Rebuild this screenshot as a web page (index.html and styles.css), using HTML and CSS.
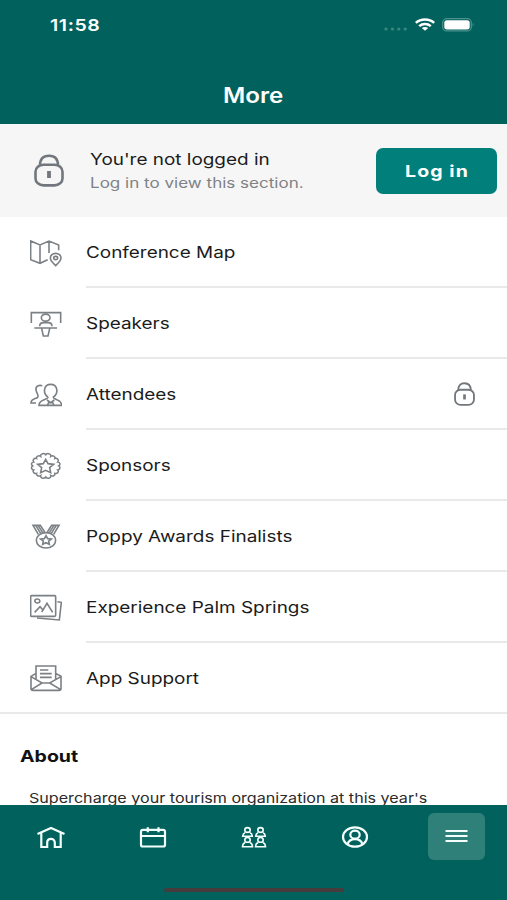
FILE: index.html
```html
<!DOCTYPE html>
<html lang="en">
<head>
<meta charset="utf-8">
<title>More</title>
<link rel="stylesheet" href="styles.css">
</head>
<body>
<svg class="defs" aria-hidden="true">
  <symbol id="lock" viewBox="0 0 30 33" preserveAspectRatio="none">
    <path d="M6 11.500C6 5 9 1.800 15 1.800S24 5 24 11.500" />
    <rect x="1.500" y="10.700" width="27" height="20.700" rx="8" ry="7"/>
    <path d="M15 17v7" stroke-width="3.800"/>
  </symbol>
</svg>
<div class="screen">
  <header class="top">
    <div class="status">
      <span class="wide clock">11:58</span>
      <div class="indicators">
        <svg width="24" height="4" viewBox="0 0 24 4" fill="#3d8781"><circle cx="2" cy="2" r="1.600"/><circle cx="8.400" cy="2" r="1.600"/><circle cx="14.800" cy="2" r="1.600"/><circle cx="21.200" cy="2" r="1.600"/></svg>
        <svg class="wifi" width="20" height="13" viewBox="0 0 20 13" fill="none" stroke="#fff" stroke-width="2.500"><path d="M.8 4.900C5.800 .5 14.200 .5 19.200 4.900"/><path d="M4.200 8.100C7.500 5.200 12.500 5.200 15.800 8.100"/><path d="M10 12.800 6.800 10.100C8.500 8.500 11.500 8.500 13.200 10.100Z" fill="#fff" stroke="none"/></svg>
        <svg width="33" height="14" viewBox="0 0 33 14"><rect x=".7" y=".7" width="28.600" height="12.200" rx="4" fill="none" stroke="#4c918b" stroke-width="1.300"/><rect x="2.300" y="2.200" width="25.400" height="9.200" rx="2.600" fill="#fff"/><path d="M30.700 4.800q2 2 0 4z" fill="#4c918b"/></svg>
      </div>
    </div>
    <h1><span class="wide title">More</span></h1>
  </header>

  <section class="login">
    <svg class="lock-big"><use href="#lock"/></svg>
    <div class="login-text">
      <span class="wide strong">You're not logged in</span>
      <span class="wide sub">Log in to view this section.</span>
    </div>
    <button class="login-btn"><span class="wide">Log in</span></button>
  </section>

  <ul class="menu">
    <li><svg class="ico" viewBox="0 0 96 84"><path d="M53 62 30 73 2 62V6L30 18 57 6 86 18V34M30 18V73M57 6V42"/><path d="M77 80C67 70 61 65 61 57A16 14 0 0 1 93 57C93 65 87 70 77 80Z"/><ellipse cx="77" cy="57" rx="6" ry="5"/></svg><div class="cell"><span class="wide">Conference Map</span></div></li>
    <li><svg class="ico" viewBox="0 0 96 84"><path d="M4 39V8H92V39M13 54H81M35 56 40 78H54L59 56M29 49C29 41 33 38 41 38H54C62 38 66 41 66 49"/><ellipse cx="47" cy="23" rx="13" ry="10.500"/></svg><div class="cell"><span class="wide">Speakers</span></div></li>
    <li><svg class="ico" viewBox="0 0 96 84"><path d="M54 48C38 38 40 10 62 10S86 38 70 48C70 58 95 52 95 73H27C27 52 54 58 54 48M51 57 62 65 73 57M52 73 56 65H68L72 73"/><path d="M37 14C21 10 15 20 19 31C21 38 27 43 23 49C17 54 3 52 3 66H18"/></svg><div class="cell"><span class="wide">Attendees</span><svg class="lock-small"><use href="#lock"/></svg></div></li>
    <li><svg class="ico" viewBox="0 0 96 84"><path d="M88 42A8 7 0 0 1 85 55A8 7 0 0 1 76 66A8 7 0 0 1 63 73A8 7 0 0 1 47 76A8 7 0 0 1 31 73A8 7 0 0 1 18 66A8 7 0 0 1 9 55A8 7 0 0 1 6 42A8 7 0 0 1 9 29A8 7 0 0 1 18 18A8 7 0 0 1 31 11A8 7 0 0 1 47 8A8 7 0 0 1 63 11A8 7 0 0 1 76 18A8 7 0 0 1 85 29A8 7 0 0 1 88 42Z" transform="translate(2.500 2.700) scale(.95 .93)"/><path d="M47 22 54 35 71 37 59 47 62 62 47 55 32 62 35 47 23 37 40 35Z"/></svg><div class="cell"><span class="wide">Sponsors</span></div></li>
    <li><svg class="ico" viewBox="0 0 96 84"><ellipse cx="48" cy="52" rx="29" ry="23"/><path d="M48 38 53 47 64 48 56 54 58 64 48 59 38 64 40 54 32 48 43 47Z"/><path d="M25 34 9 7H31L44 27M17 7 32 31M24 7 38 29M71 34 87 7H65L52 27M79 7 64 31M72 7 58 29"/></svg><div class="cell"><span class="wide">Poppy Awards Finalists</span></div></li>
    <li><svg class="ico" viewBox="0 0 96 84"><rect x="2" y="5" width="75" height="62" rx="3"/><ellipse cx="22" cy="21" rx="7.500" ry="6"/><path d="M14 55 30 38 39 48 51 28 68 55M39 48 35 54M82 23 94 25 88 78 21 72"/></svg><div class="cell"><span class="wide">Experience Palm Springs</span></div></li>
    <li><svg class="ico" viewBox="0 0 96 84"><path d="M18 46V6H77V46M30 18H55M30 29H65M30 40H65M18 28 3 37V74Q3 79 9 79H87Q93 79 93 74V37L77 28M3 38 36 57H59L93 38M5 76 36 57M91 76 59 57"/></svg><div class="cell"><span class="wide">App Support</span></div></li>
  </ul>

  <section class="about">
    <h2><span class="wide">About</span></h2>
    <p><span class="wide">Supercharge your tourism organization at this year's</span></p>
  </section>

  <nav class="tabs">
    <a><svg width="30" height="24" viewBox="0 0 30 24"><path d="M1.500 9 15 3 28.500 9M5.300 7.700V22H11.200V17.700C11.200 12.500 18.800 12.500 18.800 17.700V22H24.700V7.700"/></svg></a>
    <a><svg width="30" height="24" viewBox="0 0 30 24"><rect x="4" y="4.900" width="24" height="16.600" rx="1.800"/><path d="M4 11H28M10.800 2.200V7.200M21.500 2.200V7.200"/></svg></a>
    <a><svg class="people" width="30" height="24" viewBox="0 0 30 24"><g id="pair"><ellipse cx="8.500" cy="5" rx="2.700" ry="2.400"/><path d="M6 7.800Q3.900 8.500 3.700 11.200H13.300Q13.100 8.500 11 7.800"/><ellipse cx="8.500" cy="14.900" rx="2.700" ry="2.400"/><path d="M6 17.700Q3.700 18.400 3.500 21.700H13.500Q13.300 18.400 11 17.700"/></g><use href="#pair" x="13"/></svg></a>
    <a><svg width="30" height="24" viewBox="0 0 30 24"><ellipse cx="15" cy="12" rx="12" ry="9.700"/><ellipse cx="15" cy="9.700" rx="4.700" ry="4"/><path d="M7.500 19.500C8.500 15.500 11 14.100 15 14.100S21.500 15.500 22.500 19.500"/></svg></a>
    <a class="active"><svg width="30" height="24" viewBox="0 0 30 24"><path d="M4 6.500H26M4 11.500H26M4 16.500H26"/></svg></a>
  </nav>
  <div class="home-bar"></div>
</div>
</body>
</html>
```
FILE: styles.css
```css
* { box-sizing: border-box; }
body { margin: 0; font-family: Inter, "Liberation Sans", sans-serif; color: #1b1b1b; background: #fff; }
.defs { position: absolute; width: 0; height: 0; }
.screen { width: 507px; height: 900px; display: flex; flex-direction: column; overflow: hidden; }
svg { display: block; flex: none; }
h1, h2, p, ul { margin: 0; padding: 0; }

/* Extended-width lettering */
.wide { display: inline-block; white-space: nowrap; transform: scaleX(1.183); transform-origin: left center; }

.top { height: 124px; background: #00615d; color: #fff; flex: none; }
.status { height: 66px; padding: 0 32px 17px 50px; display: flex; align-items: center; justify-content: space-between; }
.clock { font-size: 16.5px; font-weight: 600; letter-spacing: .5px; }
.indicators { display: flex; align-items: center; gap: 7px; }
.indicators svg:first-child { margin-top: 8px; }
h1 { height: 58px; display: flex; justify-content: center; align-items: flex-start; font-size: 21px; line-height: 60px; font-weight: 600; }
.title { transform: scaleX(1.15); transform-origin: center; }

.login { height: 93px; flex: none; background: #f6f6f6; display: flex; align-items: center; padding: 0 10px 0 34px; }
.lock-big, .lock-small { fill: none; stroke: #72777d; stroke-width: 2.6; stroke-linecap: butt; }
.lock-big { width: 30px; height: 33px; }
.login-text { flex: 1; margin-left: 26px; display: flex; flex-direction: column; align-items: flex-start; }
.strong { font-size: 16px; line-height: 24px; margin-top: 1px; }
.sub { font-size: 14px; line-height: 24px; color: #7f8285; transform: scaleX(1.217); }
.login-btn { width: 121px; height: 46px; padding: 0; border: 0; border-radius: 7px; background: #007f7b; color: #fff; font: 700 16.5px Inter, sans-serif; letter-spacing: .9px; }
.login-btn .wide { transform-origin: center; }

.menu { list-style: none; flex: none; }
.menu li { height: 71px; display: flex; align-items: center; padding-left: 30px; }
.ico { width: 32px; height: 28px; fill: none; stroke: #7b8085; stroke-width: 4.800; }
.cell { flex: 1; height: 71px; margin-left: 24px; border-bottom: 2px solid #e9e9e9; display: flex; align-items: center; justify-content: space-between; padding-right: 32.500px; font-size: 16px; }
.lock-small { width: 21px; height: 24px; }
.menu li:last-child { border-bottom: 2px solid #e9e9e9; }
.menu li:last-child .cell { border-bottom: 0; }

.about { height: 91px; flex: none; overflow: hidden; }
h2 { font-size: 16.5px; line-height: 24px; font-weight: 700; padding: 30px 0 0 20px; color: #111; }
p { font-size: 13.500px; line-height: 20px; padding: 20px 0 0 29px; color: #2b2b2b; }
p .wide { transform: scaleX(1.193); }

.tabs { height: 63px; flex: none; display: flex; background: #00615d; }
.tabs a { flex: 1; display: flex; align-items: center; justify-content: center; }
.tabs svg { fill: none; stroke: #f4fffd; stroke-width: 2.200; }
.tabs .people { stroke-width: 1.600; }
.active svg { box-sizing: content-box; padding: 11.500px 13.500px; border-radius: 6px; background: #2f8079; }
.home-bar { height: 32px; flex: none; background: #00615d; display: flex; justify-content: center; padding-top: 20px; }
.home-bar::before { content: ""; width: 180px; height: 4px; border-radius: 2px; background: #463c3d; }
```
